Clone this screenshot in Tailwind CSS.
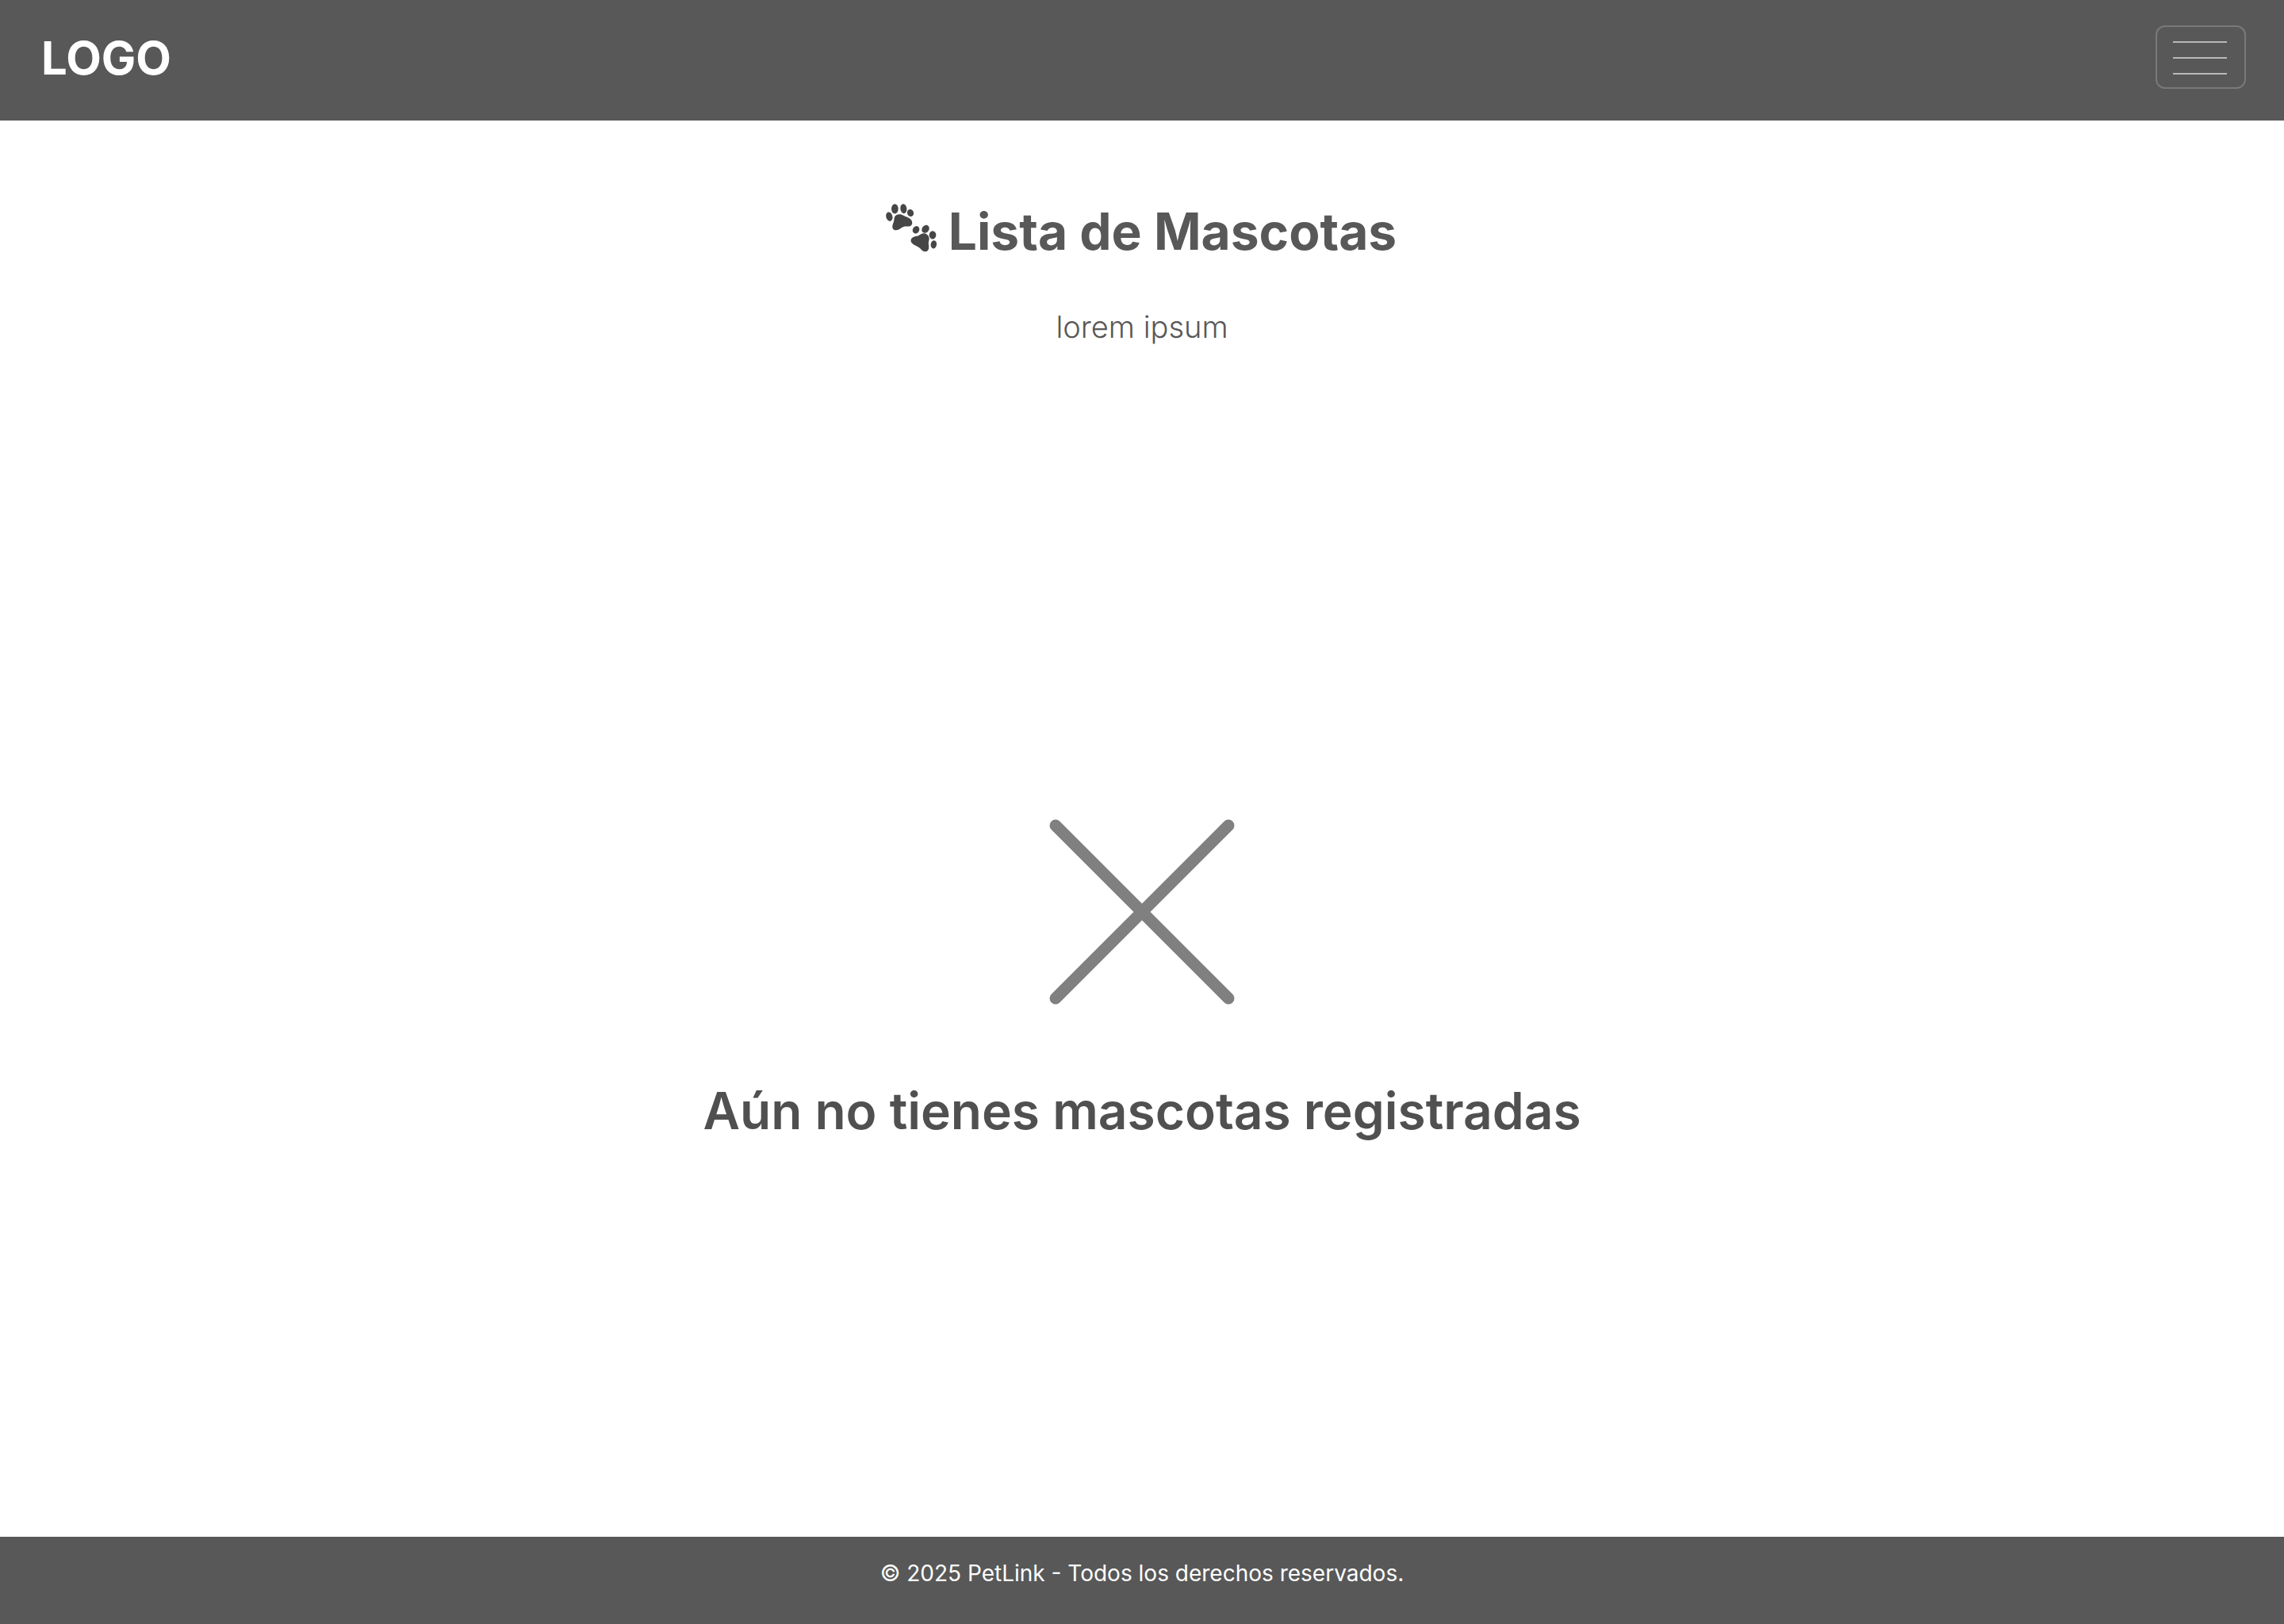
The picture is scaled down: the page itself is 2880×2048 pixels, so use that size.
<!DOCTYPE html>
<html lang="es">
<head>
<meta charset="utf-8">
<meta name="viewport" content="width=device-width, initial-scale=1">
<title>PetLink</title>
<script src="https://cdn.jsdelivr.net/npm/@tailwindcss/browser@4"></script>
</head>
<body class="flex min-h-screen flex-col bg-white font-['Inter',sans-serif] text-[#585858]">
  <header class="flex items-start justify-between bg-[#585858] pt-8 pr-12 pb-[38px] pl-[52px]">
    <a href="#" class="text-[58px] leading-[82px] font-bold text-white">LOGO</a>
    <button type="button" aria-label="Abrir menú" class="flex h-20 w-[114px] flex-col items-center justify-center gap-[18px] rounded-xl border-2 border-[#797979] pt-[2px] pr-[2px]">
      <span class="h-[2px] w-[68px] bg-[#b9b9b9]"></span>
      <span class="h-[2px] w-[68px] bg-[#b9b9b9]"></span>
      <span class="h-[2px] w-[68px] bg-[#b9b9b9]"></span>
    </button>
  </header>

  <main class="flex flex-1 flex-col items-center pt-[100px] text-center">
    <h1 class="flex gap-[15px] pr-[2px] text-[64px] leading-[80px] font-bold">
      <svg class="h-20 w-16" viewBox="48 39 192 240" fill="#464646" aria-hidden="true">
        <ellipse cx="61" cy="102.500" rx="12" ry="17.500" transform="rotate(-14 61 102.500)"/>
        <ellipse cx="82" cy="73" rx="13" ry="18.500"/>
        <ellipse cx="115" cy="72.500" rx="12" ry="18" transform="rotate(-8 115 72.500)"/>
        <ellipse cx="141" cy="88.500" rx="12" ry="14" transform="rotate(-25 141 88.500)"/>
        <path d="M84 100C91 91 105 92 116 99C124 104 133 105 140 111C149 118 151 132 142 137C134 142 123 138 115 141C106 144 98 153 87 154C76 154 72 147 73 138C74 129 79 124 79 115C80 108 80 104 84 100Z"/>
        <ellipse cx="162" cy="152.500" rx="12.500" ry="14.500" transform="rotate(28 162 152.500)"/>
        <ellipse cx="198" cy="149.500" rx="13" ry="16" transform="rotate(38 198 149.500)"/>
        <ellipse cx="225" cy="172" rx="13" ry="15.500"/>
        <ellipse cx="229" cy="208" rx="11" ry="15.500" transform="rotate(8 229 208)"/>
        <path d="M192 166C205 168 212 176 212 187C211 195 208 201 210 210C212 222 210 233 199 235C187 236 182 226 174 220C165 213 153 211 146 202C139 193 144 182 154 179C163 176 169 178 176 172C181 168 186 166 192 166Z"/>
      </svg>
      Lista de Mascotas
    </h1>
    <p class="mt-[50px] text-[38px] leading-[60px] font-light">lorem ipsum</p>

    <section class="flex flex-1 flex-col items-center justify-center gap-[91px] pt-[91px]">
      <svg class="size-60" viewBox="0 0 240 240" fill="none" stroke="#808080" stroke-width="15" stroke-linecap="round" aria-hidden="true">
        <path d="M11 11L229 229M229 11L11 229"/>
      </svg>
      <h2 class="text-[64px] leading-[80px] font-semibold text-[#505050]">Aún no tienes mascotas registradas</h2>
    </section>
  </main>

  <footer class="bg-[#585858] px-12 pt-6 pb-[42px] text-center text-[28px] leading-[44px] text-white">
    <p>© 2025 PetLink - Todos los derechos reservados.</p>
  </footer>
</body>
</html>
